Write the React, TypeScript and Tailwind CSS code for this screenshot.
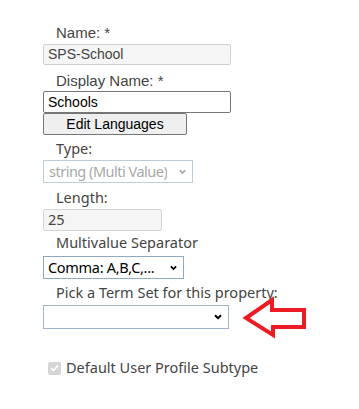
import React from "react";

const arial = "font-['Liberation_Sans',Arial,sans-serif]";
const segoe = "font-['Noto_Sans','Open_Sans',sans-serif] text-[14.5px]";

const Chevron = ({ color = "#000", w = 8 }: { color?: string; w?: number }) => (
  <svg width={w} height={6} viewBox="0 0 8 6" className="shrink-0">
    <path d="M1 1.2 L4 4.2 L7 1.2" fill="none" stroke={color} strokeWidth={2} />
  </svg>
);

const Label = ({ children, className = "" }: { children: React.ReactNode; className?: string }) => (
  <div className={`ml-[13px] h-5 leading-5 text-[#444] whitespace-nowrap ${className}`}>{children}</div>
);

const App = () => {
  return (
    <div className="relative w-[359px] h-[409px] bg-white overflow-hidden">
      <div className="flex flex-col items-start pl-[43px] pt-[23px]">
        <Label className={`${arial} text-[15px]`}>Name: *</Label>
        <div
          className={`mt-px w-[188px] h-[21px] flex items-center px-[4px] border border-[#cfcfcf] rounded-[2px] bg-[#f5f5f5] text-[14px] text-[#444] ${arial}`}
        >
          SPS-School
        </div>

        <Label className={`mt-[6px] ${arial} text-[15px]`}>Display Name: *</Label>
        <div
          className={`w-[188px] h-[22px] flex items-center px-[4px] border border-[#767676] rounded-[2px] bg-white text-[14px] text-black ${arial}`}
        >
          Schools
        </div>
        <div
          className={`w-[144px] h-[22px] flex items-center justify-center border border-[#767676] rounded-[2px] bg-[#efefef] text-[14px] text-black ${arial}`}
        >
          Edit Languages
        </div>

        <Label className={`mt-[3px] ${segoe}`}>Type:</Label>
        <div
          className={`mt-[2px] w-[150px] h-[23px] flex items-center justify-between pl-[5px] pr-[6px] border border-[#bfcdda] bg-white text-[#a8a8a8] ${segoe}`}
        >
          <span className="whitespace-nowrap overflow-hidden tracking-[-0.5px]">string (Multi Value)</span>
          <Chevron color="#a8a8a8" w={7} />
        </div>

        <Label className={`mt-[4px] ${segoe}`}>Length:</Label>
        <div
          className={`mt-[2px] w-[119px] h-[22px] flex items-center px-[4px] border border-[#d4d4d4] rounded-[2px] bg-[#f5f5f5] text-[#444] ${segoe}`}
        >
          25
        </div>

        <Label className={`mt-px ${segoe}`}>Multivalue Separator</Label>
        <div
          className={`mt-[4px] w-[141px] h-[23px] flex items-center justify-between pl-[4px] pr-[6px] border border-[#8fa9c2] bg-white text-black ${segoe}`}
        >
          <span className="whitespace-nowrap tracking-[-0.3px]">Comma: A,B,C,...</span>
          <Chevron w={7} />
        </div>

        <Label className={`mt-[3px] ${segoe}`}>Pick a Term Set for this property:</Label>
        <div className="mt-[3px] w-[186px] h-[24px] flex items-center justify-end pr-[6px] border border-[#9fb3c6] bg-white">
          <Chevron w={8} />
        </div>

        <div className={`mt-[29px] ml-[5px] flex items-center gap-[5px] h-5 ${segoe} text-[#444]`}>
          <div className="w-[13px] h-[13px] rounded-[2px] bg-[#d6d6d6] flex items-center justify-center">
            <svg width="9" height="8" viewBox="0 0 9 8">
              <path d="M1 4.2 L3.4 6.5 L8 1.3" fill="none" stroke="#fff" strokeWidth={1.8} />
            </svg>
          </div>
          <span className="whitespace-nowrap">Default User Profile Subtype</span>
        </div>
      </div>

      <svg className="absolute left-[238px] top-[294px]" width="74" height="48" viewBox="238 294 74 48">
        <polygon
          points="246,318 272,300 272,310 304,310 304,327 273,327 273,335"
          fill="none"
          stroke="#ed1c24"
          strokeWidth={4}
          strokeLinejoin="miter"
        />
      </svg>
    </div>
  );
};

export default App;
